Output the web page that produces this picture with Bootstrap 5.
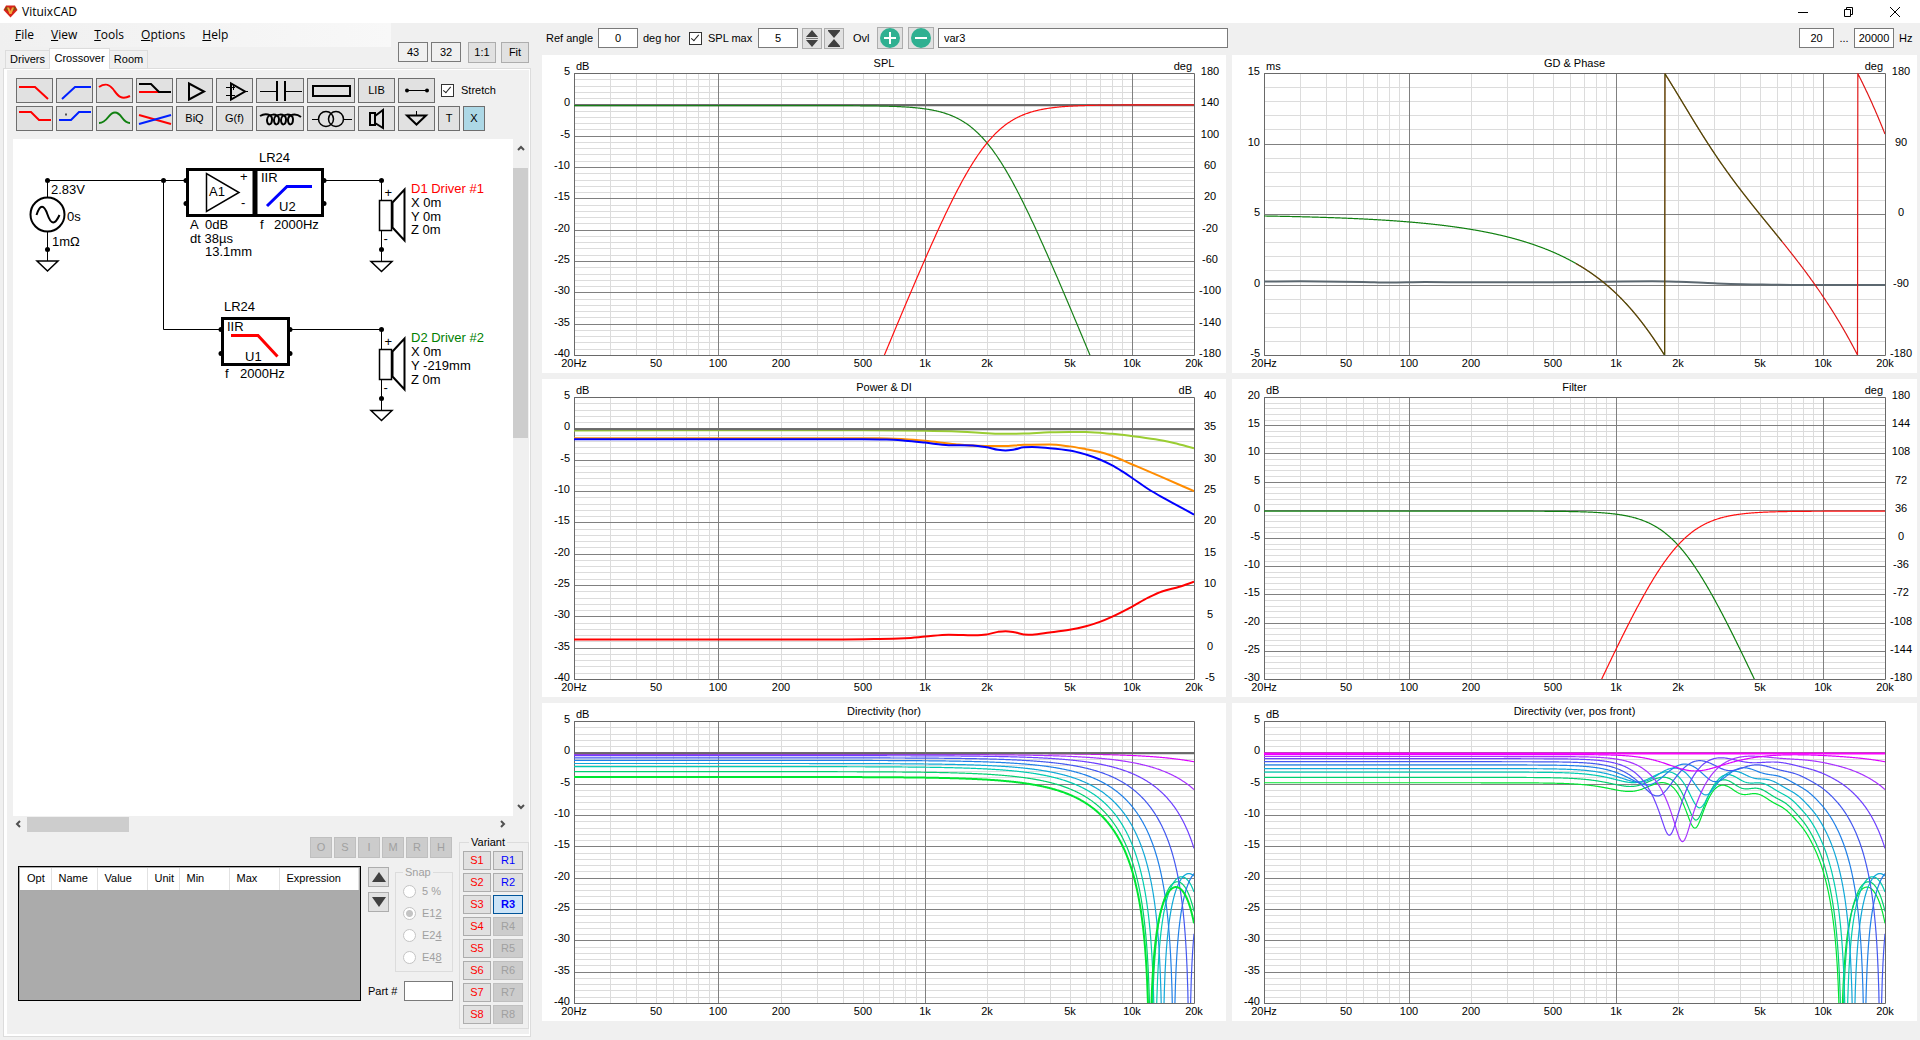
<!DOCTYPE html>
<html lang="en">
<head>
<meta charset="utf-8">
<meta name="viewport" content="width=device-width, initial-scale=1">
<title>VituixCAD</title>
<link href="https://cdn.jsdelivr.net/npm/bootstrap@5.3.0/dist/css/bootstrap.min.css" rel="stylesheet">
<style>
:root{--face:#f0f0f0;--edge:#dcdcdc}
body{font:11px/13px "Liberation Sans",Arial,sans-serif;color:#000;background:var(--face);min-height:100vh}
button,input{font:inherit;color:inherit}
a{color:inherit;text-decoration:none}
.ui-font{font-family:"Open Sans","Noto Sans",sans-serif;font-size:12px;line-height:16px}
.titlebar{height:23px;padding:0 16px 0 3px}
.titlebar button{background:none;border:0;padding:0;width:46px;height:22px}
.winbtns{margin-right:-14px}
.side{width:542px;padding:0 11px 3px 3px}
.menubar{width:391px;height:24px;margin-left:-3px;padding:4px 0 0 15px;gap:17px;background:linear-gradient(90deg,#f0f0f0,#f8f8f8)}
.tabstrip{padding-left:3px;margin-top:1px;height:20px}
.tabstrip button{background:var(--face);border:1px solid var(--edge);border-bottom:0;height:18px;padding:0;width:45px;margin-left:-1px}
.tabstrip button.active{background:#fff;height:21px;width:61px;padding:0 0 2px;margin-bottom:-1px;z-index:1;position:relative}
.tabstrip button:last-child{width:39px}
.sizes{padding:19px 2px 0 0;gap:3px}
.sizes .push{width:28px;height:21px;margin-left:4px}
.sizes .push:last-child{margin-left:2px}
.sizes .field{width:30px;background:#f0f0f0}
.field{border:1px solid #7a7a7a;background:#fff;height:20px;padding:0 3px;border-radius:0;text-align:center;min-width:0}
.push{border:1px solid #adadad;background:#e1e1e1;padding:0;display:inline-flex;align-items:center;justify-content:center}
.push:disabled{background:#ccc;border-color:#bfbfbf;color:#a0a0a0}
.page-frame{border:1px solid var(--edge);background:#fff;padding:1px 1px 2px 3px}
.page-body{background:var(--face)}
.tools{padding:8px 0 0 9px;gap:3px}
.tools .push{width:37px;height:25px;border-color:#6e6e6e}
.tools .push.wide{width:48px}
.tools .push.slim{width:22px}
.tools svg{display:block;width:100%;height:100%;fill:none;stroke:#000;stroke-width:2}
.tick{appearance:none;width:13px;height:13px;border:1px solid #333;background:#fff;margin:0;display:inline-block;position:relative}
.tools .tick{margin-left:3px}
.tick:checked::before{content:"";position:absolute;left:3px;top:0;width:4px;height:8px;border:solid #222;border-width:0 1px 1px 0;transform:rotate(40deg)}
.work{margin:8px 0 0 6px}
.sheet{background:#fff;min-height:320px}
.sheet svg{display:block;width:100%;height:100%;font-size:13px}
.vbar{width:16px;padding:5px 0}
.hbar{height:16px;padding:0 22px 0 1px}
.thumb{background:#cdcdcd}
.vbar .thumb{width:15px;height:270px;margin:16px 0 auto}
.hbar .thumb{width:102px;height:15px;margin:0 auto 0 5px}
.arrow{fill:none;stroke:#505050;stroke-width:2;display:block}
.lower{padding:4px 0 5px 11px;gap:6px}
.marks{gap:2px;margin:1px 1px 8px 0}
.marks .push{width:22px;height:21px}
.gridbox{width:343px;height:135px;border:1px solid #000;background:#ababab;padding:1px}
.gridbox table{width:100%;table-layout:fixed}
.gridbox th{font-weight:400;background:#fff;height:22px;padding:0 0 0 7px;border-right:1px solid #e2e2e2;border-bottom:1px solid #aaa}
.moves{gap:5px;margin-top:1px}
.moves .push{width:21px;height:20px}
fieldset.group{border:1px solid var(--edge)}
.group legend{float:none;width:auto;font-size:11px;line-height:13px;margin:0 0 0 6px;padding:0 2px}
.snap{width:58px;padding:1px 0 3px 7px;color:#a0a0a0}
.group.snap legend{margin-left:0}
.snap .choice{height:22px;gap:6px}
.dot{appearance:none;width:13px;height:13px;border:1px solid #c4c4c4;border-radius:50%;background:#fff;margin:0}
.dot:checked{background:radial-gradient(circle,#c4c4c4 3px,#fff 4px)}
.variants{width:70px;padding:2px 4px 4px 3px}
.vargrid{display:grid;grid-template-columns:28px 30px;gap:3px 2px}
.vargrid .push{height:19px}
.src{color:#f00}
.res:not(:disabled){color:#00f}
.res.on{background:#cce4f7;border-color:#005499;font-weight:700}
.options{height:32px;padding:0 5px 2px 4px}
.options .ringed{width:26px;height:22px}
.options .stepper{width:20px;height:21px}
.plots{display:grid;grid-template-columns:minmax(0,684fr) minmax(0,685fr);grid-auto-rows:minmax(200px,1fr);gap:6px;padding:0 3px 19px 0}
.plot-pane{background:#fff;min-width:0;overflow:hidden;position:relative}
.plot-pane svg{position:absolute;inset:0;width:100%;height:100%}
@media(max-width:1100px){.plots{grid-template-columns:1fr}}
</style>
</head>
<body class="d-flex flex-column">
<header class="titlebar bg-white d-flex align-items-center ui-font">
  <svg width="15" height="13" viewBox="0 0 15 13" aria-hidden="true"><path d="M3 .5h9L14.5 5 7.500 12.500.5 5z" fill="#d8231a"/><path d="M3 2h2.500L7.500 6.500 10 2h2.500l1 2.500-6 2.500-6-2.500z" fill="#8a4a12"/><path d="M4 2.500h2l1.500 3.500L9 2.500h2L8.500 9h-2z" fill="#f0a83a"/></svg>
  <span class="ms-1">VituixCAD</span>
  <div class="winbtns ms-auto d-flex">
    <button aria-label="Minimize"><svg width="12" height="12"><path d="M1 6.500h10" stroke="#000"/></svg></button>
    <button aria-label="Restore"><svg width="12" height="12" fill="none" stroke="#000"><path d="M1.500 3.500h6v7h-6zM3.500 3.500v-2h6v7h-2"/></svg></button>
    <button aria-label="Close"><svg width="12" height="12"><path d="M1 1l10 10M11 1L1 11" stroke="#000"/></svg></button>
  </div>
</header>
<main class="d-flex flex-grow-1">
<section class="side d-flex flex-column flex-shrink-0">
  <div class="d-flex justify-content-between">
    <div>
      <nav class="menubar d-flex ui-font">
        <a href="#"><u>F</u>ile</a><a href="#"><u>V</u>iew</a><a href="#"><u>T</u>ools</a><a href="#"><u>O</u>ptions</a><a href="#"><u>H</u>elp</a>
      </nav>
      <div class="tabstrip d-flex align-items-end" role="tablist">
        <button role="tab">Drivers</button><button role="tab" class="active" aria-selected="true">Crossover</button><button role="tab">Room</button>
      </div>
    </div>
    <div class="sizes d-flex align-items-start">
      <input class="field" value="43" aria-label="Columns">
      <input class="field" value="32" aria-label="Rows">
      <button class="push">1:1</button>
      <button class="push">Fit</button>
    </div>
  </div>
  <div class="page-frame d-flex flex-column flex-grow-1">
  <div class="page-body d-flex flex-column flex-grow-1">
    <div class="tools d-flex flex-column">
      <div class="d-flex align-items-center" style="gap:3px">
        <button class="push" aria-label="Low pass"><svg viewBox="0 0 35 23"><path d="M2 8h16l13 12" stroke="red"/></svg></button>
        <button class="push" aria-label="High pass"><svg viewBox="0 0 35 23"><path d="M5 20L18 8h16" stroke="#0020ff"/></svg></button>
        <button class="push" aria-label="Shelf"><svg viewBox="0 0 35 23"><path d="M2 8C8 4 12 5 16 10S23 22 33 17" stroke="red"/></svg></button>
        <button class="push" aria-label="Notch"><svg viewBox="0 0 35 23"><path d="M2 13h20" stroke="red"/><path d="M2 5h12l8 8h12"/></svg></button>
        <button class="push" aria-label="Buffer"><svg viewBox="0 0 35 23"><path d="M12 4.500v16L27 12.500z"/></svg></button>
        <button class="push" aria-label="Op amp"><svg viewBox="0 0 35 23"><path d="M14 4.500v16L28 12.500z"/><path d="M9 8.500h9M9 16.500h9M16.500 6v5M28 12.500h3" stroke-width="1"/></svg></button>
        <button class="push wide" aria-label="Capacitor"><svg viewBox="0 0 46 23"><path d="M3 12.500h17M28 12.500h17" stroke-width="1"/><path d="M20 2v20M28 2v20"/></svg></button>
        <button class="push wide" aria-label="Resistor"><svg viewBox="0 0 46 23"><path d="M5 7h37v10H5z"/></svg></button>
        <button class="push">LIB</button>
        <button class="push" aria-label="Wire"><svg viewBox="0 0 35 23"><path d="M8 11.500h20" stroke-width="1"/><g fill="#000" stroke="none"><circle cx="8" cy="11.500" r="2"/><circle cx="28" cy="11.500" r="2"/></g></svg></button>
        <input class="tick" type="checkbox" id="stretch" checked><label for="stretch" class="ms-1">Stretch</label>
      </div>
      <div class="d-flex" style="gap:3px">
        <button class="push" aria-label="Low shelf"><svg viewBox="0 0 35 23"><path d="M2 5h12l8 8h12" stroke="red"/></svg></button>
        <button class="push" aria-label="High shelf"><svg viewBox="0 0 35 23"><path d="M2 13h12l8-8h12" stroke="#0020ff"/><path d="M8 7.500h2" stroke="#555"/></svg></button>
        <button class="push" aria-label="Peak"><svg viewBox="0 0 35 23"><path d="M2 16C11 16 11 5.500 18 5.500S25 16 33 16" stroke="#108010"/></svg></button>
        <button class="push" aria-label="Linkwitz"><svg viewBox="0 0 35 23"><path d="M2 8l32 9" stroke="red"/><path d="M2 17L34 8" stroke="#0020ff"/></svg></button>
        <button class="push">BiQ</button>
        <button class="push">G(f)</button>
        <button class="push wide" aria-label="Inductor"><svg viewBox="0 0 46 23"><path d="M3 9C8 6 15 7 15 12C15 19 10 19 10 13C10 6 22 6 22 12C22 19 17 19 17 13C17 6 29 6 29 12C29 19 24 19 24 13C24 6 36 6 36 12C36 19 31 19 31 13C31 7 39 6 44 10" stroke-width="2"/></svg></button>
        <button class="push wide" aria-label="Transformer"><svg viewBox="0 0 46 23"><g stroke-width="1.500"><circle cx="18" cy="12" r="7.500"/><circle cx="28" cy="12" r="7.500"/><path d="M4 12.500h7M36 12.500h8" stroke-width="1"/></g></svg></button>
        <button class="push" aria-label="Driver"><svg viewBox="0 0 35 23"><path d="M11 6h5v12h-5zM16 9l8-6v18l-8-5"/></svg></button>
        <button class="push" aria-label="Ground"><svg viewBox="0 0 35 23"><path d="M17.500 4v4" stroke-width="1"/><path d="M8 8.500h19l-9.500 9z"/></svg></button>
        <button class="push slim">T</button>
        <button class="push slim" style="background:#add8e6">X</button>
      </div>
    </div>
    <div class="work d-flex flex-column flex-grow-1">
      <div class="d-flex flex-grow-1">
        <div class="sheet flex-grow-1">
<svg role="img" aria-label="Crossover schematic">
 <defs>
  <g id="gnd"><path d="M-10.500 0h21L0 10z" fill="none" stroke="#000" stroke-width="1.500"/></g>
  <g id="spk"><path d="M0 0v20M0 50v31" stroke="#000" fill="none"/><g fill="#fff" stroke="#000" stroke-width="2"><path d="M11 22L23 9v51L11 47z"/><path d="M-2 20h12v30H-2z" stroke-width="1.500"/></g><circle r="2.500"/><circle cy="69" r="2.500"/><use href="#gnd" y="81"/><text x="3" y="16">+</text><text x="2" y="62">-</text></g>
 </defs>
 <g transform="translate(-13 -139)">
  <g fill="none" stroke="#000"><path d="M47.500 197v-16.500H186M163.500 180.500v149H221M324 180.500h57.500M290 329.500h91.500M47.500 232v29"/>
   <circle cx="47.500" cy="214.500" r="17" stroke-width="2"/><path d="M36.500 215C40 204 44 204 47.500 214.500S55 225 59.500 215" stroke-width="2"/>
   <path d="M187.500 169.500h135v46h-135zM222.500 318.500h66v46h-66z" stroke-width="3"/><path d="M255 168v49" stroke-width="5"/><path d="M206.500 173.500v38l32.500-19z" stroke-width="1.500"/>
   <path d="M267 206l20-19.500h25" stroke="#00f" stroke-width="3"/><path d="M231 335.500h27l19.500 21" stroke="red" stroke-width="3"/></g>
  <g><circle cx="47.500" cy="180.500" r="2.500"/><circle cx="47.500" cy="249.500" r="2.500"/><circle cx="163.500" cy="180.500" r="2.500"/><circle cx="186" cy="180.500" r="2.500"/><circle cx="186" cy="203.500" r="2.500"/><circle cx="324" cy="180.500" r="2.500"/><circle cx="324" cy="203.500" r="2.500"/><circle cx="221" cy="329.500" r="2.500"/><circle cx="221" cy="353.500" r="2.500"/><circle cx="290" cy="329.500" r="2.500"/><circle cx="290" cy="353.500" r="2.500"/></g>
  <use href="#gnd" x="47.500" y="261"/><use href="#spk" x="381.500" y="180.500"/><use href="#spk" x="381.500" y="329.500"/>
  <text x="51" y="194">2.83V</text><text x="67" y="221">0s</text><text x="52" y="246">1mΩ</text>
  <text x="259" y="162">LR24</text><text x="209" y="196">A1</text><text x="240" y="181">+</text><text x="241" y="207">-</text>
  <text x="261" y="182">IIR</text><text x="279" y="211">U2</text>
  <text x="190" y="229">A</text><text x="205" y="229">0dB</text><text x="190" y="243">dt 38µs</text><text x="205" y="256">13.1mm</text>
  <text x="260" y="229">f</text><text x="274" y="229">2000Hz</text>
  <text x="224" y="311">LR24</text><text x="227" y="331">IIR</text><text x="245" y="361">U1</text><text x="225" y="378">f</text><text x="240" y="378">2000Hz</text>
  <text x="411" y="193" fill="red">D1 Driver #1</text><text x="411" y="207">X 0m</text><text x="411" y="221">Y 0m</text><text x="411" y="234">Z 0m</text>
  <text x="411" y="342" fill="green">D2 Driver #2</text><text x="411" y="356">X 0m</text><text x="411" y="370">Y -219mm</text><text x="411" y="384">Z 0m</text>
 </g>
</svg>
        </div>
        <div class="vbar d-flex flex-column align-items-start">
          <svg class="arrow ms-1" width="8" height="8"><path d="M1 6l3-3 3 3"/></svg><div class="thumb"></div><svg class="arrow ms-1" width="8" height="8"><path d="M1 2l3 3 3-3"/></svg>
        </div>
      </div>
      <div class="hbar d-flex align-items-center">
        <svg class="arrow" width="8" height="8"><path d="M6 1L3 4l3 3"/></svg><div class="thumb"></div><svg class="arrow" width="8" height="8"><path d="M2 1l3 3-3 3"/></svg>
      </div>
    </div>
    <div class="lower d-flex justify-content-between">
      <div class="flex-grow-1">
        <div class="marks d-flex justify-content-end">
          <button class="push" disabled>O</button><button class="push" disabled>S</button><button class="push" disabled>I</button><button class="push" disabled>M</button><button class="push" disabled>R</button><button class="push" disabled>H</button>
        </div>
        <div class="d-flex justify-content-between">
          <div class="gridbox"><table>
            <colgroup><col style="width:31px"><col style="width:46px"><col style="width:50px"><col style="width:32px"><col style="width:50px"><col style="width:50px"><col></colgroup>
            <thead><tr><th>Opt</th><th>Name</th><th>Value</th><th>Unit</th><th>Min</th><th>Max</th><th>Expression</th></tr></thead></table></div>
          <div class="d-flex flex-column justify-content-between" style="width:85px">
            <div class="d-flex justify-content-between">
              <div class="moves d-flex flex-column">
                <button class="push" aria-label="Move up"><svg width="14" height="12"><path d="M7 1l7 10H0z" fill="#404040"/></svg></button>
                <button class="push" aria-label="Move down"><svg width="14" height="12"><path d="M7 11l7-10H0z" fill="#404040"/></svg></button>
              </div>
              <fieldset class="group snap" disabled><legend>Snap</legend>
                <div class="choice d-flex align-items-center"><input class="dot" type="radio" name="snap" id="s5"><label for="s5">5 %</label></div>
                <div class="choice d-flex align-items-center"><input class="dot" type="radio" name="snap" id="s12" checked><label for="s12">E1<u>2</u></label></div>
                <div class="choice d-flex align-items-center"><input class="dot" type="radio" name="snap" id="s24"><label for="s24">E2<u>4</u></label></div>
                <div class="choice d-flex align-items-center"><input class="dot" type="radio" name="snap" id="s48"><label for="s48">E4<u>8</u></label></div>
              </fieldset>
            </div>
            <div class="d-flex align-items-center justify-content-between"><label for="part">Part #</label><input class="field" id="part" style="width:49px"></div>
          </div>
        </div>
      </div>
      <fieldset class="group variants"><legend>Variant</legend>
        <div class="vargrid">
          <button class="push src">S1</button><button class="push res">R1</button>
          <button class="push src">S2</button><button class="push res">R2</button>
          <button class="push src">S3</button><button class="push res on">R3</button>
          <button class="push src">S4</button><button class="push res" disabled>R4</button>
          <button class="push src">S5</button><button class="push res" disabled>R5</button>
          <button class="push src">S6</button><button class="push res" disabled>R6</button>
          <button class="push src">S7</button><button class="push res" disabled>R7</button>
          <button class="push src">S8</button><button class="push res" disabled>R8</button>
        </div>
      </fieldset>
    </div>
  </div>
  </div>
</section>
<section class="flex-grow-1 d-flex flex-column" style="min-width:0">
  <div class="options d-flex align-items-center">
    <label for="ref" style="width:52px">Ref angle</label><input class="field" id="ref" value="0" style="width:40px">
    <span style="width:51px;padding-left:5px">deg hor</span>
    <input type="checkbox" class="tick" id="splmax" checked><label for="splmax" style="width:56px;padding-left:6px">SPL max</label>
    <input class="field" value="5" style="width:40px" aria-label="SPL max value">
    <button class="push stepper ms-1" aria-label="Step"><svg width="14" height="19"><path d="M7 1l6 7H1zM7 18l6-7H1z" fill="#404040"/><path d="M1 9.500h12" stroke="#777"/></svg></button>
    <button class="push stepper" style="margin-left:2px" aria-label="Compress"><svg width="14" height="19"><path d="M7 9l6-7H1zM7 10l6 7H1z" fill="#404040"/><path d="M1 1.500h12M1 17.500h12" stroke="#404040"/></svg></button>
    <span style="width:33px;padding-left:9px">Ovl</span>
    <button class="push ringed" aria-label="Add overlay"><svg width="20" height="20"><circle cx="10" cy="10" r="10" fill="#2fb091"/><path d="M10 4v12M4 10h12" stroke="#fff" stroke-width="2"/></svg></button>
    <button class="push ringed" style="margin-left:5px" aria-label="Remove overlay"><svg width="20" height="20"><circle cx="10" cy="10" r="10" fill="#2fb091"/><path d="M4 10h12" stroke="#fff" stroke-width="2"/></svg></button>
    <input class="field text-start ms-1" value="var3" style="width:290px;padding-left:5px" aria-label="Overlay name">
    <input class="field ms-auto" value="20" style="width:35px" aria-label="Lowest frequency"><span class="text-center" style="width:20px">...</span><input class="field" value="20000" style="width:40px" aria-label="Highest frequency"><span style="padding-left:5px;width:21px">Hz</span>
  </div>
  <div class="plots flex-grow-1">
    <div class="plot-pane" data-plot="spl"></div><div class="plot-pane" data-plot="gd"></div>
    <div class="plot-pane" data-plot="power"></div><div class="plot-pane" data-plot="filter"></div>
    <div class="plot-pane" data-plot="hor"></div><div class="plot-pane" data-plot="ver"></div>
  </div>
</section>
</main>
<script src="https://cdn.jsdelivr.net/npm/bootstrap@5.3.0/dist/js/bootstrap.bundle.min.js"></script>
<script>
const FC = 2000, db = v => 20 * Math.log10(Math.max(v, 1e-6));
const lp = f => 1 / (1 + (f / FC) ** 4), hp = f => 1 - lp(f);
const rad = d => d * Math.PI / 180;
// Bessel J1 by numeric integration, for the directivity of a round piston
function j1(x){ let s = 0; const n = 60; for (let i = 0; i < n; i++){ const t = (i + .5) * Math.PI / n; s += Math.cos(t - x * Math.sin(t)); } return s / n; }
const piston = (f, a) => { const x = 3.83 * f / 12200 * Math.sin(rad(a)); return x < 1e-3 ? 1 : 2 * j1(x) / x; };
const LOSS = [0, .1, .25, .45, .8, 1.2, 1.7, 2.2, 3, 3.85];
const R = 1.825, OFF = .219, AXIS = Math.hypot(R, OFF);
function vertical(f, a){
  const k = 2 * Math.PI * f / 344, d = Math.hypot(R * Math.cos(rad(a)), R * Math.sin(rad(a)) + OFF);
  const w = lp(f) * AXIS / d, ph = k * ((d - R) - (AXIS - R)), t = hp(f);
  const m = Math.hypot(t + w * Math.cos(ph), w * Math.sin(ph));
  return db(m * Math.abs(piston(f, a))) - LOSS[a / 10];
}
function phase(f){ const w = f / FC; let p = -2 * Math.atan2(Math.SQRT2 * w, 1 - w * w) * 180 / Math.PI - .01368 * f; while (p < -180) p += 360; return p; }
const COL = ['#696969','#dc00ff','#a832ff','#6e40ff','#4458f0','#2080e8','#10a8d8','#00ccb0','#00d070','#00e632'];
const deg = (a, b) => p => a + (p + 180) / 360 * (b - a);
const fn = (f, c, w = 1.2, lo = 20, hi = 20000, o = 1) => ({f, c, w, lo, hi, o});
const pt = (p, c, w = 2) => ({p, c, w});
const lab = (a, b, n) => Array.from({length: n + 1}, (_, i) => Math.round(a + (b - a) * i / n));
const flatZero = fn(() => -.05, '#696969', 2);
const angles = [90,80,70,60,50,40,30,20,10];
const PLOTS = {
 spl:{t:'SPL',u:'dB',v:'deg',a:-40,b:5,r:lab(-180,180,9),s:[flatZero,fn(f=>db(lp(f))-.12,'#188018'),fn(f=>db(hp(f)),'#ff1010')]},
 gd:{t:'GD & Phase',u:'ms',v:'deg',a:-5,b:15,r:lab(-180,180,4),s:[
   pt([[20,.24],[30,.26],[60,.22],[80,.17],[120,.21],[200,.19],[500,.2],[900,.23],[1500,.26],[2000,.23],[3000,.12],[5000,.03],[8000,0],[20000,0]],'#5c6870'),
   fn(f=>deg(-5,15)(phase(f)),'#e01818',1.2,640),fn(f=>deg(-5,15)(phase(f)),'#108010',1.2,20,640),fn(f=>deg(-5,15)(phase(f)),'#006800',1.2,640,6350,.7)]},
 power:{t:'Power & DI',u:'dB',v:'dB',a:-40,b:5,r:lab(-5,40,9),s:[
   pt([[20,-.25],[500,-.22],[1000,-.3],[1500,-.45],[2000,-.7],[2400,-.8],[3000,-.75],[4000,-.55],[5000,-.5],[6000,-.52],[8000,-.8],[10000,-1.15],[13000,-1.65],[16000,-2.25],[20000,-3.1]],'#9acd32'),
   flatZero,
   pt([[20,-1.5],[600,-1.5],[800,-1.65],[1000,-1.9],[1400,-2.45],[1800,-2.7],[2400,-2.75],[3000,-2.55],[4000,-2.5],[5000,-2.8],[6000,-3.25],[7000,-3.7],[8000,-4.3],[10000,-5.65],[14000,-7.7],[20000,-9.95]],'#ff8c00'),
   pt([[20,-1.65],[500,-1.65],[650,-1.72],[800,-1.9],[1000,-2.2],[1300,-2.6],[1700,-2.65],[2000,-2.95],[2250,-3.35],[2450,-3.45],[2700,-3.3],[3000,-2.95],[3300,-2.9],[4000,-3.1],[5000,-3.45],[6000,-4.1],[7000,-4.9],[8000,-5.8],[9000,-6.8],[10000,-7.8],[12000,-9.6],[14000,-10.9],[17000,-12.4],[20000,-13.7]],'#0000ff'),
   pt([[20,-33.6],[400,-33.6],[600,-33.52],[800,-33.4],[1000,-33.15],[1300,-32.85],[1800,-32.95],[2000,-32.8],[2250,-32.4],[2450,-32.3],[2700,-32.45],[3000,-32.8],[3300,-32.85],[4000,-32.5],[5000,-32.05],[6000,-31.5],[7000,-30.8],[8000,-30],[10000,-28.4],[12000,-26.95],[14000,-25.95],[17000,-25.2],[20000,-24.4]],'#ff0000')]},
 filter:{t:'Filter',u:'dB',v:'deg',a:-30,b:20,r:lab(-180,180,10),s:[fn(f=>db(lp(f))-.15,'#108010'),fn(f=>db(hp(f))-.15,'#ff1010')]},
 hor:{t:'Directivity (hor)',u:'dB',a:-40,b:5,s:[...angles.slice(1).map(a=>fn(f=>db(Math.abs(piston(f,a)))-LOSS[a/10],COL[a/10])),fn(f=>db(Math.abs(piston(f,90)))-LOSS[9],COL[9],2),flatZero]},
 ver:{t:'Directivity (ver, pos front)',u:'dB',a:-40,b:5,s:[...angles.map(a=>fn(f=>vertical(f,a),COL[a/10])),fn(()=>-.1,'#ff00ff',2)]}
};
function draw(el){
  const P = PLOTS[el.dataset.plot], W = el.clientWidth, H = el.clientHeight;
  const L = 32, Rt = W - 32, T = 18, B = H - 18;
  const X = f => L + Math.log10(f / 20) / 3 * (Rt - L), Y = v => B - (v - P.a) / (P.b - P.a) * (B - T);
  const c = v => Math.round(v) + .5;
  let minor = '', major = '', txt = '', cur = '';
  for (let v = P.a; v <= P.b; v++){ const s = `M${L} ${c(Y(v))}H${Rt}`; if (v % 5) minor += s; else { major += s; txt += `<text x="${L - 4}" y="${Math.round(Y(v)) + 2}" text-anchor="end">${v}</text>`; } }
  for (const d of [10, 100, 1000, 10000]) for (let i = 1; i < 10; i++){ const f = d * i; if (f <= 20 || f >= 20000) continue; const s = `M${c(X(f))} ${T}V${B}`; if (i == 1) major += s; else minor += s; }
  if (P.r) P.r.forEach((v, i) => txt += `<text x="${Rt + 16}" y="${Math.round(B - i / (P.r.length - 1) * (B - T)) + 2}" text-anchor="middle">${v}</text>`);
  [[20,'20Hz'],[50,'50'],[100,'100'],[200,'200'],[500,'500'],[1000,'1k'],[2000,'2k'],[5000,'5k'],[10000,'10k'],[20000,'20k']].forEach(([f, t]) => txt += `<text x="${Math.round(X(f))}" y="${B + 12}" text-anchor="middle">${t}</text>`);
  txt += `<text x="${L + 2}" y="${T - 3}">${P.u}</text><text x="${(L + Rt) / 2}" y="12" text-anchor="middle">${P.t.replace('&', '&amp;')}</text>`;
  if (P.v) txt += `<text x="${Rt - 2}" y="${T - 3}" text-anchor="end">${P.v}</text>`;
  for (const s of P.s){
    let d = '';
    if (s.p){
      const q = s.p.map(([f, v]) => [X(f), Y(v) + .5]);
      d = 'M' + q[0];
      // cubic segments with slope-limited tangents, so flat parts stay flat
      const sl = q.slice(1).map((b, i) => (b[1] - q[i][1]) / (b[0] - q[i][0]));
      const m = q.map((_, i) => i == 0 ? sl[0] : i == q.length - 1 ? sl[i - 1] : sl[i - 1] * sl[i] <= 0 ? 0 : 2 * sl[i - 1] * sl[i] / (sl[i - 1] + sl[i]));
      for (let i = 1; i < q.length; i++){ const h = (q[i][0] - q[i-1][0]) / 3; d += `C${q[i-1][0] + h} ${q[i-1][1] + h * m[i-1]} ${q[i][0] - h} ${q[i][1] - h * m[i]} ${q[i]}`; }
    } else {
      const n = 900, r = Math.log(s.hi / s.lo);
      for (let i = 0; i <= n; i++){ const f = s.lo * Math.exp(r * i / n), y = Math.min(Y(s.f(f)) + .5, H + 300); d += (i ? 'L' : 'M') + X(f).toFixed(2) + ' ' + y.toFixed(2); }
    }
    cur += `<path d="${d}" stroke="${s.c}" stroke-width="${s.w}" opacity="${s.o || 1}"/>`;
  }
  const id = 'clip-' + el.dataset.plot;
  el.innerHTML = `<svg role="img" aria-label="${P.t.replace('&', '&amp;')}"><clipPath id="${id}"><rect x="${L}" y="${T}" width="${Rt - L}" height="${B - T}"/></clipPath>
  <g fill="none"><path d="${minor}" stroke="#dcdcdc"/><path d="${major}" stroke="#808080"/><path d="M${L + .5} ${T + .5}H${Rt + .5}V${B + .5}H${L + .5}z" stroke="#696969"/><g clip-path="url(#${id})" stroke-linejoin="round">${cur}</g></g>${txt}</svg>`;
}
const drawAll = () => document.querySelectorAll('.plot-pane').forEach(draw);
drawAll(); addEventListener('resize', drawAll);
</script>
</body>
</html>
